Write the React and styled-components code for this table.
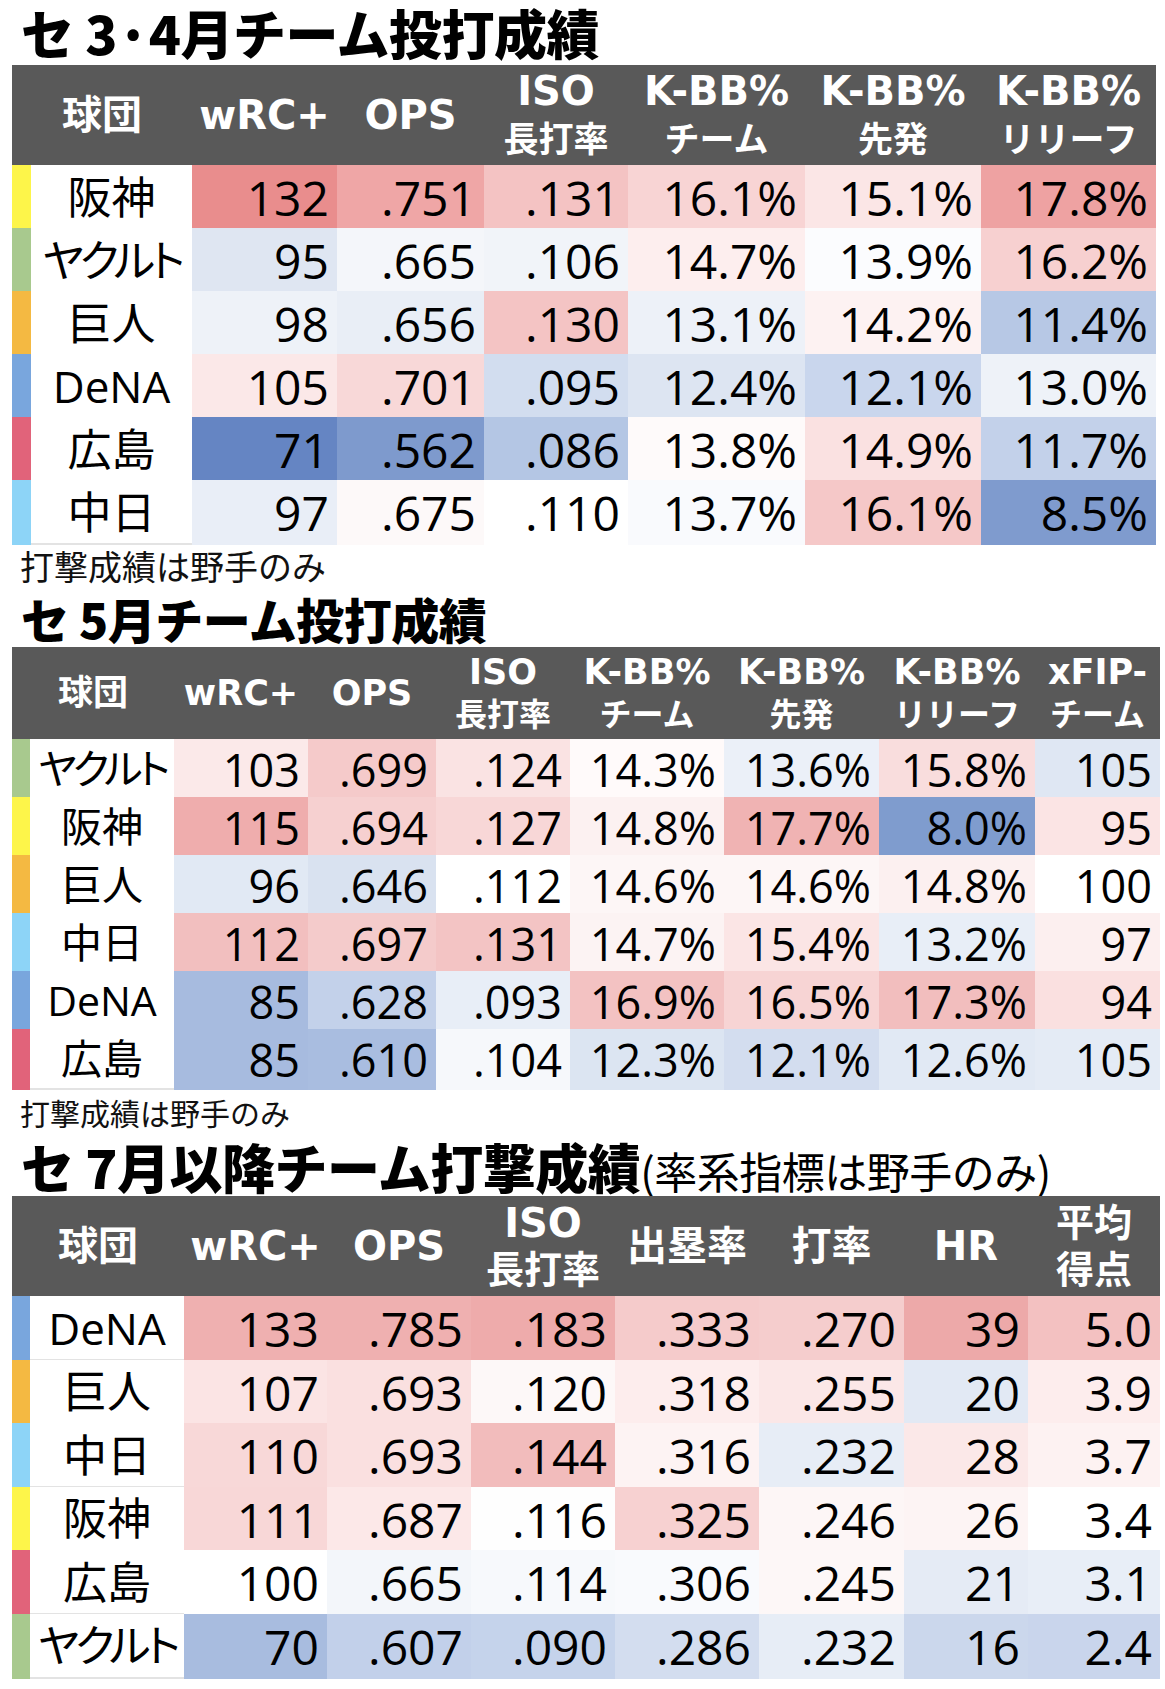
import styled, { createGlobalStyle } from "styled-components";

const TEAM_COLORS = {
  阪神: "#fdf54a",
  ヤクルト: "#a8c98e",
  巨人: "#f4b942",
  DeNA: "#79a6dd",
  広島: "#e1637a",
  中日: "#8dd4f7",
};

// each cell: [text, background]
const TABLES = [
  {
    title: "セ 3·4月チーム投打成績",
    titleSize: 53,
    titleHeight: 65,
    cols: "19px 161px 145px 147px 144px 177px 176px 175px",
    headHeight: 100,
    headSize: 40,
    subSize: 35,
    lineHeight: 44,
    lineGap: 5,
    rowHeight: 63,
    nameSize: 44,
    numSize: 48,
    heads: ["wRC+", "OPS", ["ISO", "長打率"], ["K-BB%", "チーム"], ["K-BB%", "先発"], ["K-BB%", "リリーフ"]],
    rows: [
      ["阪神", [["132", "#e98d8d"], [".751", "#efa6a6"], [".131", "#f4c3c3"], ["16.1%", "#f8d4d4"], ["15.1%", "#fbe6e6"], ["17.8%", "#eea2a2"]]],
      ["ヤクルト", [["95", "#dfe6f2"], [".665", "#f4f6fa"], [".106", "#f1f4f9"], ["14.7%", "#fdeeee"], ["13.9%", "#fbfcfe"], ["16.2%", "#f7d0d0"]]],
      ["巨人", [["98", "#eef2f8"], [".656", "#e9eef6"], [".130", "#f4c4c4"], ["13.1%", "#edf1f8"], ["14.2%", "#fdf2f2"], ["11.4%", "#b7c8e5"]]],
      ["DeNA", [["105", "#fbe8e8"], [".701", "#f8d8d8"], [".095", "#d2ddef"], ["12.4%", "#dde5f2"], ["12.1%", "#c9d6ed"], ["13.0%", "#eef2f8"]]],
      ["広島", [["71", "#6585c3"], [".562", "#7e9acd"], [".086", "#b4c6e4"], ["13.8%", "#fefafa"], ["14.9%", "#fae1e1"], ["11.7%", "#c3d1ea"]]],
      ["中日", [["97", "#e9eef7"], [".675", "#fdf9f9"], [".110", "#ffffff"], ["13.7%", "#f9fafd"], ["16.1%", "#f5c8c8"], ["8.5%", "#7f9bce"]]],
    ],
    note: { text: "打撃成績は野手のみ", size: 34, height: 46 },
  },
  {
    title: "セ 5月チーム投打成績",
    titleSize: 48,
    titleHeight: 58,
    cols: "18px 144px 134px 128px 134px 154px 155px 156px 125px",
    headHeight: 92,
    headSize: 35,
    subSize: 32,
    lineHeight: 40,
    lineGap: 3,
    rowHeight: 58,
    nameSize: 41,
    numSize: 45,
    heads: ["wRC+", "OPS", ["ISO", "長打率"], ["K-BB%", "チーム"], ["K-BB%", "先発"], ["K-BB%", "リリーフ"], ["xFIP-", "チーム"]],
    rows: [
      ["ヤクルト", [["103", "#fbe9e9"], [".699", "#f5caca"], [".124", "#fae3e3"], ["14.3%", "#fffafa"], ["13.6%", "#ebf0f8"], ["15.8%", "#f9dddd"], ["105", "#dfe7f3"]]],
      ["阪神", [["115", "#efadad"], [".694", "#f6d0d0"], [".127", "#f8d7d7"], ["14.8%", "#fcf1f1"], ["17.7%", "#f0b3b3"], ["8.0%", "#7f9cce"], ["95", "#fbe4e4"]]],
      ["巨人", [["96", "#e1e9f4"], [".646", "#d9e2f0"], [".112", "#ffffff"], ["14.6%", "#fdf6f6"], ["14.6%", "#fdf6f6"], ["14.8%", "#fcf0f0"], ["100", "#ffffff"]]],
      ["中日", [["112", "#f2bfbf"], [".697", "#f4cbcb"], [".131", "#f3c4c4"], ["14.7%", "#fcf3f3"], ["15.4%", "#fbe5e5"], ["13.2%", "#e8eef7"], ["97", "#fcefef"]]],
      ["DeNA", [["85", "#a7bbdf"], [".628", "#c3d1ea"], [".093", "#e8eef7"], ["16.9%", "#f3c2c2"], ["16.5%", "#f7d4d4"], ["17.3%", "#f2bebe"], ["94", "#fae0e0"]]],
      ["広島", [["85", "#a7bbdf"], [".610", "#a9bde0"], [".104", "#f6f8fb"], ["12.3%", "#dce5f2"], ["12.1%", "#d3ddef"], ["12.6%", "#e1e9f4"], ["105", "#e4ebf5"]]],
    ],
    note: { text: "打撃成績は野手のみ", size: 30, height: 50 },
  },
  {
    title: "セ 7月以降チーム打撃成績",
    sub: "(率系指標は野手のみ)",
    titleSize: 53,
    titleHeight: 59,
    cols: "18px 154px 143px 144px 144px 144px 145px 124px 132px",
    headHeight: 100,
    headSize: 40,
    subSize: 38,
    lineHeight: 44,
    lineGap: 3,
    rowHeight: 63.5,
    nameSize: 44,
    numSize: 48,
    heads: ["wRC+", "OPS", ["ISO", "長打率"], "出塁率", "打率", "HR", ["平均", "得点"]],
    rows: [
      ["DeNA", [["133", "#efb0b0"], [".785", "#efb0b0"], [".183", "#eeabab"], [".333", "#f5cbcb"], [".270", "#f5cdcd"], ["39", "#eda9a9"], ["5.0", "#f3c1c1"]]],
      ["巨人", [["107", "#fbe4e4"], [".693", "#fae0e0"], [".120", "#fdf8f8"], [".318", "#fdeded"], [".255", "#fbe7e7"], ["20", "#e2e9f4"], ["3.9", "#fdeded"]]],
      ["中日", [["110", "#f8d8d8"], [".693", "#fae0e0"], [".144", "#f2bcbc"], [".316", "#fdf3f3"], [".232", "#e7edf6"], ["28", "#fbe8e8"], ["3.7", "#fdf2f2"]]],
      ["阪神", [["111", "#f8d7d7"], [".687", "#fce8e8"], [".116", "#fefefe"], [".325", "#f7d1d1"], [".246", "#fdf6f6"], ["26", "#fdf4f4"], ["3.4", "#ffffff"]]],
      ["広島", [["100", "#ffffff"], [".665", "#f3f6fa"], [".114", "#f7f9fc"], [".306", "#f9fafd"], [".245", "#fdf7f7"], ["21", "#e5ebf5"], ["3.1", "#e8eef7"]]],
      ["ヤクルト", [["70", "#a8bcdf"], [".607", "#c2d0ea"], [".090", "#c5d3eb"], [".286", "#d3ddef"], [".232", "#e7edf6"], ["16", "#cbd7ec"], ["2.4", "#c9d5ec"]]],
    ],
  },
];

const isKana = (text) => /[\u30a0-\u30ff]/.test(text);

function StatTable({ table }) {
  return (
    <Table>
      <HeadRow $cols={table.cols} $h={table.headHeight}>
        <HeadCell $span={2} $gap={0}>
          <HeadLine $size={table.headSize} $lh={table.lineHeight}>球団</HeadLine>
        </HeadCell>
        {table.heads.map((head, i) => {
          const lines = Array.isArray(head) ? head : [head];
          return (
            <HeadCell key={i} $gap={table.lineGap}>
              {lines.map((line, j) => (
                <HeadLine
                  key={j}
                  $size={lines.length === 1 || /[A-Za-z]/.test(line) ? table.headSize : table.subSize}
                  $lh={table.lineHeight}
                >
                  {line}
                </HeadLine>
              ))}
            </HeadCell>
          );
        })}
      </HeadRow>
      {table.rows.map(([team, cells]) => (
        <Row key={team} $cols={table.cols} $h={table.rowHeight}>
          <Stripe $color={TEAM_COLORS[team]} />
          <Name $size={table.nameSize} $kana={isKana(team)}>{team}</Name>
          {cells.map(([text, bg], i) => (
            <Value key={i} $bg={bg} $size={table.numSize}>{text}</Value>
          ))}
        </Row>
      ))}
    </Table>
  );
}

function App() {
  return (
    <Page>
      <GlobalStyle />
      {TABLES.map((table) => (
        <Section key={table.title}>
          <Title $size={table.titleSize} $h={table.titleHeight}>
            {table.title}
            {table.sub && <Sub>{table.sub}</Sub>}
          </Title>
          <StatTable table={table} />
          {table.note && (
            <Note $size={table.note.size} $h={table.note.height}>{table.note.text}</Note>
          )}
        </Section>
      ))}
    </Page>
  );
}

const GlobalStyle = createGlobalStyle`
  body {
    margin: 0;
    background: #ffffff;
  }
`;

const Page = styled.div`
  width: 1165px;
  height: 1689px;
  box-sizing: border-box;
  padding-left: 12px;
  background: #ffffff;
  color: #000000;
  overflow: hidden;
`;

const Section = styled.section`
  display: flex;
  flex-direction: column;
  align-items: flex-start;
`;

const Title = styled.h1`
  margin: 0;
  padding-left: 9px;
  height: ${(p) => p.$h}px;
  font-family: "Noto Sans CJK JP", sans-serif;
  font-weight: 900;
  font-size: ${(p) => p.$size}px;
  line-height: ${(p) => p.$h}px;
  letter-spacing: -0.5px;
  white-space: nowrap;
`;

const Sub = styled.span`
  font-weight: 400;
  font-size: 43px;
  letter-spacing: -0.5px;
`;

const Note = styled.p`
  margin: 0;
  padding-left: 8px;
  height: ${(p) => p.$h}px;
  font-family: "Noto Sans CJK JP", sans-serif;
  font-size: ${(p) => p.$size}px;
  line-height: ${(p) => p.$h}px;
  color: #111111;
  white-space: nowrap;
`;

const Table = styled.div`
  display: flex;
  flex-direction: column;
`;

const HeadRow = styled.div`
  display: grid;
  grid-template-columns: ${(p) => p.$cols};
  height: ${(p) => p.$h}px;
  background: #595959;
`;

const HeadCell = styled.div`
  grid-column: span ${(p) => p.$span || 1};
  display: flex;
  flex-direction: column;
  align-items: center;
  justify-content: center;
  gap: ${(p) => p.$gap}px;
  color: #ffffff;
  font-family: "DejaVu Sans", "Noto Sans CJK JP", sans-serif;
  font-weight: 700;
`;

const HeadLine = styled.span`
  font-size: ${(p) => p.$size}px;
  line-height: ${(p) => p.$lh}px;
  white-space: nowrap;
`;

const Row = styled.div`
  display: grid;
  grid-template-columns: ${(p) => p.$cols};
  height: ${(p) => p.$h}px;
`;

const Stripe = styled.div`
  background: ${(p) => p.$color};
`;

const Name = styled.div`
  display: flex;
  align-items: center;
  justify-content: center;
  box-sizing: border-box;
  background: #ffffff;
  border-bottom: 2px solid #e3e3e3;
  font-family: "Open Sans", "Noto Sans CJK JP", sans-serif;
  font-size: ${(p) => p.$size}px;
  font-feature-settings: "palt";
  letter-spacing: ${(p) => (p.$kana ? "-4px" : "0")};
  line-height: 1;
  white-space: nowrap;
`;

const Value = styled.div`
  display: flex;
  align-items: center;
  justify-content: flex-end;
  padding-right: 8px;
  background: ${(p) => p.$bg};
  font-family: "Open Sans", sans-serif;
  font-size: ${(p) => p.$size}px;
  white-space: nowrap;
`;

export default App;
